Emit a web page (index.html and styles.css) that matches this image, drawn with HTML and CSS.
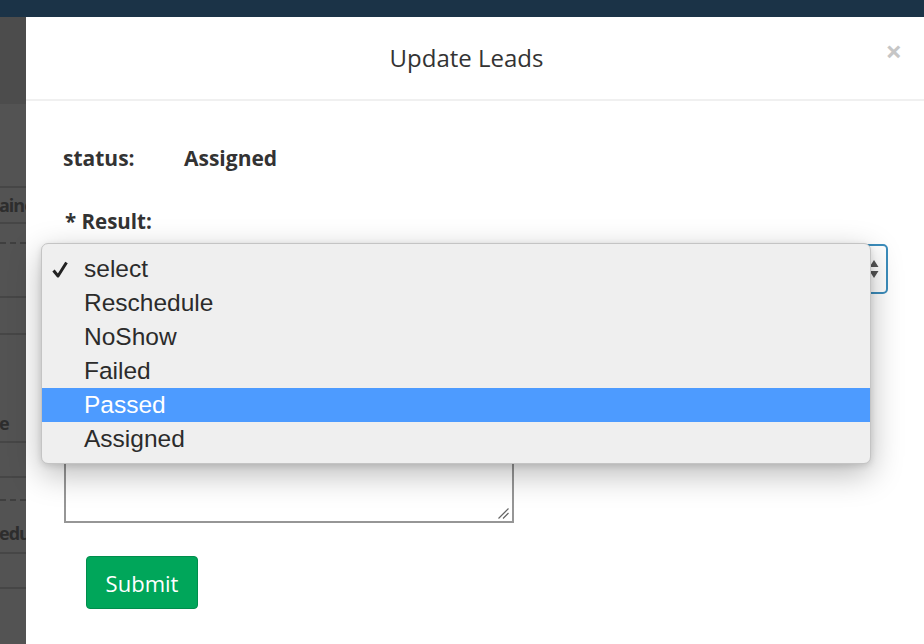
FILE: index.html
```html
<!DOCTYPE html>
<html>
<head>
<meta charset="utf-8">
<link rel="stylesheet" href="styles.css">
</head>
<body>
<div class="topbar"></div>
<div class="main">
  <div class="strip">
    <div class="srow h87 dark"></div>
    <div class="srow h84 solid"></div>
    <div class="srow h36 solid"><span class="stext">aine</span></div>
    <div class="srow h20 dashed"></div>
    <div class="srow h54 solid"></div>
    <div class="srow h37 solid"></div>
    <div class="srow h108 solid low"><span class="stext">e</span></div>
    <div class="srow h35 solid"></div>
    <div class="srow h23 dashed"></div>
    <div class="srow h53 solid lower"><span class="stext">edu</span></div>
    <div class="srow h35 solid"></div>
    <div class="srow fill"></div>
  </div>
  <div class="modal">
    <div class="modal-header">
      <h4 class="modal-title">Update Leads</h4>
      <span class="close">×</span>
    </div>
    <div class="modal-body">
      <div class="status-row">
        <span class="status-label">status:</span>
        <span class="status-value">Assigned</span>
      </div>
      <div class="result-label">* Result:</div>
      <div class="select-wrap">
        <div class="select">
          <svg class="arrows" width="10" height="20" viewBox="0 0 10 20"><path d="M5 1 L9.5 8 L0.5 8 Z M0.5 12 L9.5 12 L5 19 Z" fill="#555"/></svg>
        </div>
        <div class="menu">
          <div class="item"><svg class="check" width="16" height="17" viewBox="0 0 16 17"><path d="M1.5 9.5 L6 15 L14.5 1.5" fill="none" stroke="#222" stroke-width="3" stroke-linejoin="round"/></svg>select</div>
          <div class="item">Reschedule</div>
          <div class="item">NoShow</div>
          <div class="item">Failed</div>
          <div class="item active">Passed</div>
          <div class="item">Assigned</div>
        </div>
      </div>
      <div class="textarea">
        <svg class="grip" width="11" height="11" viewBox="0 0 11 11"><path d="M0.5 10.5 L10.5 0.5 M5 10.5 L10.5 5" stroke="#666" stroke-width="1.2"/></svg>
      </div>
      <button class="submit">Submit</button>
    </div>
  </div>
</div>
</body>
</html>
```
FILE: styles.css
```css
html, body {
  margin: 0;
  padding: 0;
  height: 100%;
  overflow: hidden;
  font-family: "Open Sans", "Liberation Sans", sans-serif;
}
.topbar {
  height: 17px;
  background: #1b3347;
}
.main {
  display: flex;
  height: 627px;
}
.strip {
  width: 26px;
  flex: none;
  background: #535353;
  display: flex;
  flex-direction: column;
  overflow: hidden;
}
.srow {
  box-sizing: border-box;
  display: flex;
  justify-content: flex-start;
  align-items: center;
  overflow: hidden;
  flex: none;
}
.srow.low {
  align-items: flex-start;
  padding-top: 74px;
}
.srow.lower {
  padding-top: 12px;
}
.srow.dark { background: #4c4c4c; }
.srow.solid { border-bottom: 2px solid #464646; }
.srow.dashed { border-bottom: 2px dashed #3f3f3f; }
.srow.fill { flex: 1; }
.h87 { height: 87px; }
.h84 { height: 84px; }
.h36 { height: 36px; }
.h20 { height: 20px; }
.h54 { height: 54px; }
.h37 { height: 37px; }
.h108 { height: 108px; }
.h35 { height: 35px; }
.h23 { height: 23px; }
.h53 { height: 53px; }
.stext {
  white-space: nowrap;
  font-size: 18px;
  line-height: 28px;
  font-weight: 700;
  letter-spacing: -1px;
  color: #2d2d2d;
  margin-left: -1px;
  flex: none;
}
.modal {
  flex: 1;
  background: #fff;
  position: relative;
}
.modal-header {
  height: 82px;
  border-bottom: 2px solid #f0f0f0;
  display: flex;
  align-items: center;
  justify-content: center;
  padding-right: 17px;
  position: relative;
}
.modal-title {
  margin: 0 0 2px 0;
  font-size: 24px;
  font-weight: 400;
  color: #333;
}
.close {
  position: absolute;
  right: 22px;
  top: 19px;
  font-size: 29px;
  font-weight: 700;
  color: #c6c6c6;
  line-height: 1;
}
.modal-body {
  padding: 43px 0 0 37px;
}
.status-row {
  display: flex;
  height: 28px;
  align-items: center;
  font-size: 21px;
  font-weight: 700;
  color: #333;
}
.status-label {
  width: 121px;
}
.result-label {
  margin-top: 35px;
  padding-left: 2px;
  height: 28px;
  line-height: 28px;
  font-size: 20.5px;
  font-weight: 700;
  color: #333;
}
.select-wrap {
  position: relative;
  margin-top: 9px;
}
.select {
  margin-left: 1px;
  width: 824px;
  height: 50px;
  box-sizing: border-box;
  border: 2px solid #3c8dbc;
  border-radius: 5px;
  display: flex;
  align-items: center;
  justify-content: flex-end;
  padding-right: 7px;
}
.menu {
  position: absolute;
  left: -22px;
  top: -1px;
  width: 830px;
  box-sizing: border-box;
  padding: 8px 0 7px;
  background: #efefef;
  border: 1px solid #c4c4c4;
  border-radius: 7px;
  box-shadow: 0 10px 32px rgba(0, 0, 0, 0.28), 0 2px 6px rgba(0, 0, 0, 0.12);
  z-index: 5;
}
.item {
  height: 34px;
  display: flex;
  align-items: center;
  padding-left: 42px;
  font-family: "Liberation Sans", Arial, sans-serif;
  font-size: 24.5px;
  color: #2b2b2b;
  position: relative;
}
.item.active {
  background: #4d9bff;
  color: #fff;
}
.check {
  position: absolute;
  left: 10px;
  top: 9px;
}
.textarea {
  margin-top: 139px;
  margin-left: 1px;
  width: 450px;
  height: 90px;
  box-sizing: border-box;
  border: 2px solid #969696;
  position: relative;
}
.grip {
  position: absolute;
  right: 3px;
  bottom: 2px;
}
.submit {
  display: block;
  margin: 33px 0 0 23px;
  width: 112px;
  height: 53px;
  background: #00a65a;
  border: 1px solid #008d4c;
  border-radius: 4px;
  color: #fff;
  font-family: "Open Sans", "Liberation Sans", sans-serif;
  font-size: 22px;
  padding: 0;
}
```
